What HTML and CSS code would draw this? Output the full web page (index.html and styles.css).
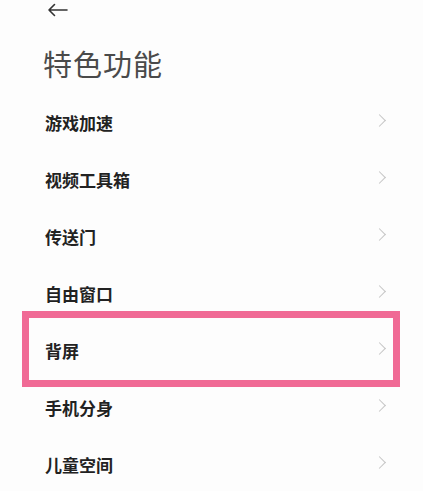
FILE: index.html
```html
<!DOCTYPE html>
<html lang="zh">
<head>
<meta charset="utf-8">
<link rel="stylesheet" href="styles.css">
</head>
<body>
<div class="page">
  <div class="topbar">
    <svg class="back" width="21" height="14" viewBox="0 0 21 14" fill="none" stroke="#333" stroke-width="1.6" stroke-linecap="round" stroke-linejoin="round">
      <path d="M20 7H2M7.5 1.5L2 7l5.5 5.5"/>
    </svg>
  </div>
  <h1 class="title">特色功能</h1>
  <ul class="list">
    <li class="row"><span class="label">游戏加速</span><span class="chev"></span></li>
    <li class="row"><span class="label">视频工具箱</span><span class="chev"></span></li>
    <li class="row"><span class="label">传送门</span><span class="chev"></span></li>
    <li class="row"><span class="label">自由窗口</span><span class="chev"></span></li>
    <li class="row highlight"><span class="label">背屏</span><span class="chev"></span></li>
    <li class="row"><span class="label">手机分身</span><span class="chev"></span></li>
    <li class="row"><span class="label">儿童空间</span><span class="chev"></span></li>
  </ul>
</div>
</body>
</html>
```

FILE: styles.css
```css
html, body {
  margin: 0;
  padding: 0;
  background: #fdfdfd;
}
body {
  font-family: "Noto Sans CJK SC", "Noto Sans", sans-serif;
  width: 423px;
  height: 491px;
  overflow: hidden;
}
.page {
  display: flex;
  flex-direction: column;
}
.topbar {
  height: 20px;
  padding-left: 47px;
  display: flex;
  align-items: center;
}
.back {
  display: block;
}
.title {
  margin: 0;
  padding: 23px 0 0 43px;
  height: 49px;
  font-size: 29px;
  line-height: 40px;
  font-weight: 400;
  color: #4a4a4a;
  letter-spacing: 1px;
}
.list {
  list-style: none;
  margin: 0;
  padding: 0;
}
.row {
  height: 57px;
  display: flex;
  align-items: center;
  justify-content: space-between;
  padding: 0 37px 0 45px;
  position: relative;
}
.label {
  font-size: 17px;
  font-weight: 700;
  color: #222;
  padding-top: 3px;
}
.chev {
  width: 8px;
  height: 8px;
  border-top: 1.3px solid #c4c4c4;
  border-right: 1.3px solid #c4c4c4;
  transform: rotate(45deg);
  margin-right: 2px;
}
.highlight::after {
  content: "";
  position: absolute;
  left: 22px;
  right: 23px;
  top: -9px;
  bottom: -10px;
  border: 7px solid #f06a95;
}
```
